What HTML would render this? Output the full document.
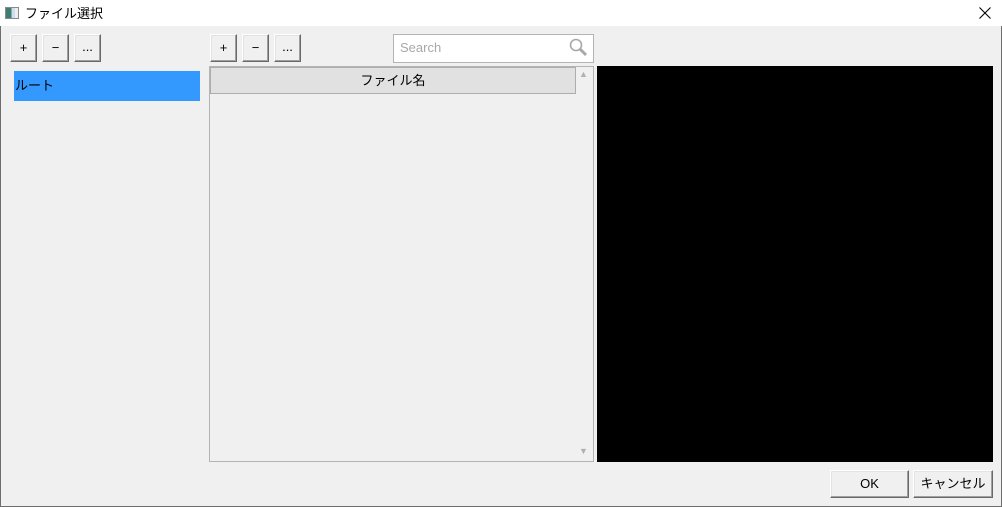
<!DOCTYPE html>
<html><head><meta charset="utf-8"><style>
*{margin:0;padding:0;box-sizing:border-box}
body{width:1002px;height:507px;background:#f0f0f0;position:relative;overflow:hidden;font-family:"Liberation Sans","Noto Sans CJK JP",sans-serif;font-size:12px;color:#000}
.a{position:absolute}
.btn{position:absolute;background:#f0f0f0;border:1px solid;border-color:#fff #696969 #696969 #fff;box-shadow:inset -1px -1px 0 #a0a0a0,inset 1px 1px 0 #e3e3e3;text-align:center;font-size:13px}
</style></head><body>
<div class="a" style="left:0;top:0;width:1002px;height:507px;border:1px solid #6e6e6e;border-top:none"></div>
<div class="a" style="left:0;top:0;width:1002px;height:26px;background:#fff"></div>
<div class="a" style="left:5px;top:7px;width:14px;height:12px;border:1px solid #8a8a8a;background:linear-gradient(90deg,#3f7d6c 0 45%,#cde 45% 75%,#eee 75%)"></div>
<div class="a" style="left:25px;top:3px;font-size:13px">ファイル選択</div>
<svg class="a" style="left:979px;top:7px" width="12" height="12"><path d="M0.5 0.5L11.5 11.5M11.5 0.5L0.5 11.5" stroke="#000" stroke-width="1.1"/></svg>

<div class="btn" style="left:10px;top:34px;width:27px;height:28px;line-height:26px">+</div>
<div class="btn" style="left:42px;top:34px;width:27px;height:28px;line-height:26px">−</div>
<div class="btn" style="left:74px;top:34px;width:27px;height:28px;line-height:24px">...</div>
<div class="btn" style="left:210px;top:34px;width:27px;height:28px;line-height:26px">+</div>
<div class="btn" style="left:242px;top:34px;width:27px;height:28px;line-height:26px">−</div>
<div class="btn" style="left:274px;top:34px;width:27px;height:28px;line-height:24px">...</div>

<div class="a" style="left:14px;top:71px;width:186px;height:30px;background:#3399ff;line-height:30px;padding-left:1px;font-size:13px">ルート</div>

<div class="a" style="left:393px;top:34px;width:201px;height:29px;background:#fff;border:1px solid #b4b4b4"></div>
<div class="a" style="left:400px;top:40px;color:#a8a8a8;font-size:13px">Search</div>
<svg class="a" style="left:568px;top:37px" width="20" height="20"><circle cx="8" cy="8" r="5.5" fill="none" stroke="#a8a8a8" stroke-width="1.6"/><line x1="12" y1="12" x2="18" y2="18" stroke="#a8a8a8" stroke-width="3"/></svg>

<div class="a" style="left:209px;top:66px;width:385px;height:396px;border:1px solid #b4b4b4;background:#f0f0f0"></div>
<div class="a" style="left:210px;top:67px;width:366px;height:27px;background:#e1e1e1;border:1px solid #adadad;text-align:center;line-height:26px;font-size:13px">ファイル名</div>
<div class="a" style="left:579px;top:69px;color:#b0b0b0;font-size:9px">▲</div>
<div class="a" style="left:579px;top:446px;color:#b0b0b0;font-size:9px">▼</div>

<div class="a" style="left:597px;top:66px;width:396px;height:396px;background:#000"></div>

<div class="btn" style="left:830px;top:470px;width:79px;height:28px;line-height:26px">OK</div>
<div class="btn" style="left:913px;top:470px;width:80px;height:28px;line-height:26px">キャンセル</div>
</body></html>
